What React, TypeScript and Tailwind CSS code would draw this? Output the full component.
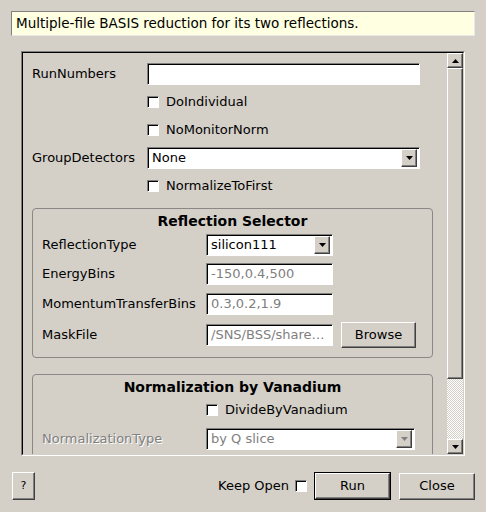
import React from "react";

const raised =
  "bg-[#d4d0c8] border border-t-white border-l-white border-r-[#404040] border-b-[#404040] shadow-[inset_-1px_-1px_0_#808080]";
const sunken =
  "border border-t-[#808080] border-l-[#808080] border-r-white border-b-white shadow-[inset_1px_1px_0_#000]";

function Arrow({ up = false, gray = false }: { up?: boolean; gray?: boolean }) {
  return (
    <svg width="7" height="4" viewBox="0 0 7 4">
      <polygon points={up ? "3.5,0 7,4 0,4" : "0,0 7,0 3.5,4"} fill={gray ? "#808080" : "#000"} />
    </svg>
  );
}

function Check() {
  return <div className={`w-[12px] h-[12px] shrink-0 bg-white ${sunken}`} />;
}

function TextBox({ w, value = "", disabled = false }: { w: number; value?: string; disabled?: boolean }) {
  return (
    <div
      className={`h-[22px] bg-white flex items-center pl-[4px] pr-[2px] overflow-hidden whitespace-nowrap ${sunken} ${
        disabled ? "text-[#808080]" : "text-black"
      }`}
      style={{ width: w }}
    >
      {value}
    </div>
  );
}

function Combo({ w, value, disabled = false }: { w: number; value: string; disabled?: boolean }) {
  return (
    <div
      className={`h-[22px] bg-white flex items-center pl-[4px] pr-[2px] ${sunken} ${disabled ? "text-[#808080]" : "text-black"}`}
      style={{ width: w }}
    >
      <span className="flex-1">{value}</span>
      <div className={`w-[16px] h-[18px] flex items-center justify-center ${raised}`}>
        <Arrow gray={disabled} />
      </div>
    </div>
  );
}

function CheckRow({ label, indent }: { label: string; indent: number }) {
  return (
    <div className="h-[22px] flex items-center" style={{ paddingLeft: indent }}>
      <Check />
      <span className="ml-[7px]">{label}</span>
    </div>
  );
}

export default function App() {
  return (
    <div className="w-[486px] h-[512px] bg-[#d4d0c8] font-['DejaVu_Sans',sans-serif] text-[13px] text-black flex flex-col pt-[11px] px-[11px] overflow-hidden">
      <div className="h-[25px] w-[464px] bg-[#ffffe1] border border-t-[#808080] border-l-[#808080] border-r-[#e8e8e8] border-b-[#e8e8e8] flex items-center pl-[4px] text-[13.5px]">
        Multiple-file BASIS reduction for its two reflections.
      </div>

      <div className="mt-[15px] ml-[10px] w-[444px] h-[405px] border border-t-[#808080] border-l-[#808080] border-r-white border-b-white">
        <div className="w-full h-full flex border border-t-black border-l-black border-r-[#d4d0c8] border-b-[#d4d0c8]">
          <div className="flex-1 overflow-hidden">
            <div className="flex flex-col gap-[6px] pt-[10px] pl-[9px]">
              <div className="h-[22px] flex items-center">
                <span className="w-[115px]">RunNumbers</span>
                <TextBox w={273} />
              </div>
              <CheckRow label="DoIndividual" indent={115} />
              <CheckRow label="NoMonitorNorm" indent={115} />
              <div className="h-[22px] flex items-center">
                <span className="w-[115px]">GroupDetectors</span>
                <Combo w={273} value="None" />
              </div>
              <CheckRow label="NormalizeToFirst" indent={115} />

              <div className="mt-[5px] w-[401px] border border-[#8a8884] rounded-[4px] flex flex-col pl-[9px] pb-[9px]">
                <div className="mt-[4px] leading-[16px] font-bold text-center pr-[9px] text-[14px]">Reflection Selector</div>
                <div className="mt-[5px] h-[21px] flex items-center">
                  <span className="w-[164px]">ReflectionType</span>
                  <Combo w={127} value="silicon111" />
                </div>
                <div className="mt-[8px] h-[21px] flex items-center">
                  <span className="w-[164px]">EnergyBins</span>
                  <TextBox w={127} value="-150,0.4,500" disabled />
                </div>
                <div className="mt-[9px] h-[21px] flex items-center">
                  <span className="w-[164px]">MomentumTransferBins</span>
                  <TextBox w={127} value="0.3,0.2,1.9" disabled />
                </div>
                <div className="mt-[8px] h-[26px] flex items-center">
                  <span className="w-[164px]">MaskFile</span>
                  <TextBox w={127} value="/SNS/BSS/share…" disabled />
                  <div className={`ml-[8px] w-[75px] h-[26px] flex items-center justify-center ${raised}`}>Browse</div>
                </div>
              </div>

              <div className="mt-[10px] w-[401px] border border-[#8a8884] rounded-[4px] flex flex-col pl-[9px] pb-[9px]">
                <div className="mt-[4px] leading-[16px] font-bold text-center pr-[9px] text-[14px]">Normalization by Vanadium</div>
                <div className="mt-[4px]">
                  <CheckRow label="DivideByVanadium" indent={164} />
                </div>
                <div className="mt-[7px] h-[22px] flex items-center">
                  <span className="w-[164px] text-[#808080] [text-shadow:1px_1px_0_#fff]">NormalizationType</span>
                  <Combo w={209} value="by Q slice" disabled />
                </div>
              </div>
            </div>
          </div>

          <div className="w-[16px] flex flex-col">
            <div className={`h-[15px] flex items-center justify-center ${raised}`}>
              <Arrow up />
            </div>
            <div className={`h-[311px] ${raised}`} />
            <div className="flex-1 bg-[image:repeating-conic-gradient(#ffffff_0_25%,#d4d0c8_0_50%)] bg-[length:2px_2px]" />
            <div className={`h-[15px] flex items-center justify-center ${raised}`}>
              <Arrow />
            </div>
          </div>
        </div>
      </div>

      <div className="mt-[16px] flex items-center pl-[1px]">
        <div className={`w-[23px] h-[28px] flex items-center justify-center text-[11px] ${raised}`}>?</div>
        <div className="flex-1" />
        <span>Keep Open</span>
        <div className="ml-[6px]">
          <Check />
        </div>
        <div className="ml-[7px] w-[77px] h-[28px] border border-black">
          <div className={`w-full h-full flex items-center justify-center ${raised}`}>Run</div>
        </div>
        <div className={`ml-[8px] w-[76px] h-[27px] flex items-center justify-center ${raised}`}>Close</div>
      </div>
    </div>
  );
}
